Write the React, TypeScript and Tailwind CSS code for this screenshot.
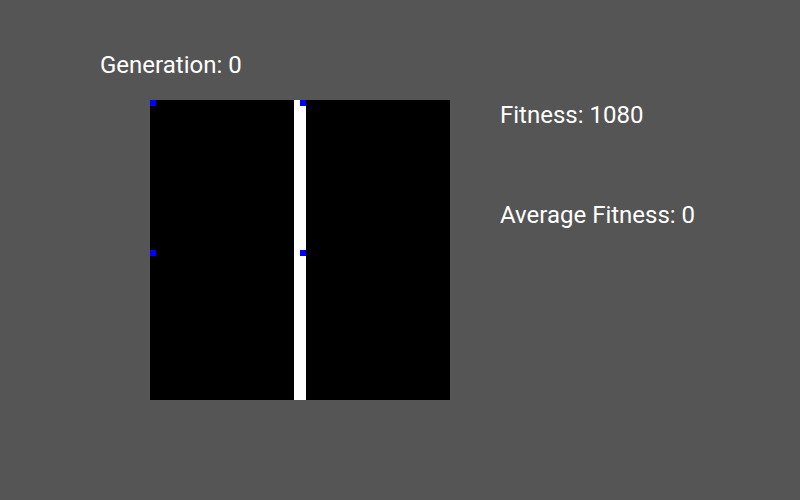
export default function App() {
  return (
    <div className="w-[800px] h-[500px] bg-[#555555] text-white font-['Roboto',sans-serif] text-[24px] leading-none flex">
      <div className="pl-[100px] pt-[53px] flex flex-col">
        <p>Generation: 0</p>
        <div className="ml-[50px] mt-[23px] w-[300px] h-[300px] bg-black relative">
          <div className="absolute left-[144px] top-0 w-[12px] h-[300px] bg-white" />
          <div className="absolute left-0 top-0 w-[6px] h-[6px] bg-[#0000ff]" />
          <div className="absolute left-[150px] top-0 w-[6px] h-[6px] bg-[#0000ff]" />
          <div className="absolute left-0 top-[150px] w-[6px] h-[6px] bg-[#0000ff]" />
          <div className="absolute left-[150px] top-[150px] w-[6px] h-[6px] bg-[#0000ff]" />
        </div>
      </div>
      <div className="ml-[50px] pt-[103px] flex flex-col gap-[76px]">
        <p>Fitness: 1080</p>
        <p>Average Fitness: 0</p>
      </div>
    </div>
  );
}
